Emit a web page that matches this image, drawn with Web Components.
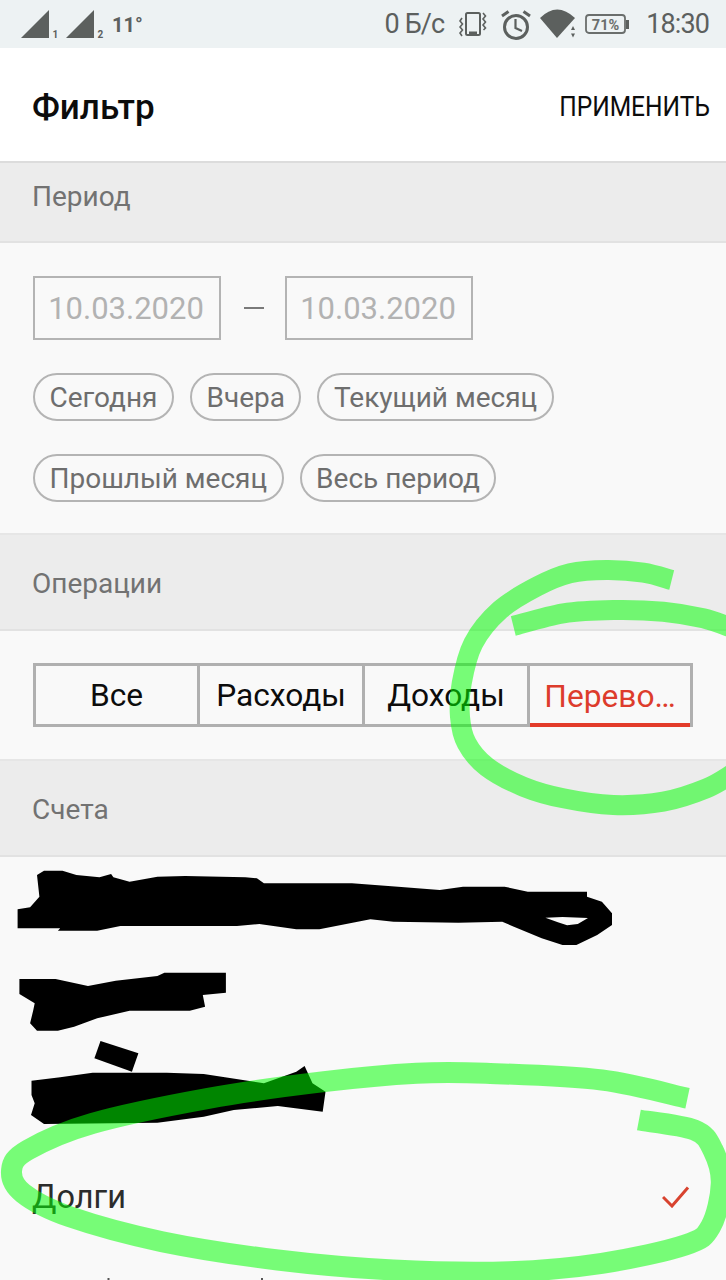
<!DOCTYPE html>
<html lang="ru"><head><meta charset="utf-8"><title>Фильтр</title>
<style>
html,body{margin:0;padding:0;background:#f9f9f9;}
body{width:726px;height:1280px;overflow:hidden;font-family:Roboto,"Noto Sans",sans-serif;}
</style></head><body>
<filter-screen>
  <status-bar></status-bar>
  <app-header title="Фильтр" action="ПРИМЕНИТЬ"></app-header>
  <filter-section heading="Период" head="80" offset="-6">
    <period-picker></period-picker>
  </filter-section>
  <filter-section heading="Операции" head="96" offset="1">
    <segment-tabs></segment-tabs>
  </filter-section>
  <filter-section heading="Счета" head="96" offset="1">
    <account-list></account-list>
  </filter-section>
  <scribble-layer></scribble-layer>
</filter-screen>
<script>
const def=(name,html,init)=>customElements.define(name,class extends HTMLElement{
  constructor(){super();this.attachShadow({mode:'open'});}
  connectedCallback(){this.shadowRoot.innerHTML=typeof html==='function'?html(this):html;if(init)init(this);}
});
def('filter-screen',`<style>:host{display:flex;flex-direction:column;position:relative;width:726px;height:1280px;overflow:hidden;background:#f9f9f9}</style><slot></slot>`);
def('status-bar',`<style>
:host{display:flex;align-items:center;height:48px;background:#edf2f3;color:#5c605e;font-family:Roboto,sans-serif;flex:none;padding:0 17px 0 21px;box-sizing:border-box}
svg{display:block;flex:none}
.n{font-size:27px;line-height:48px;letter-spacing:-.9px}
.t{font-size:20px;font-weight:700;position:relative;top:1px;left:-1px}
.sp{flex:1}
</style>
<svg width="36" height="48" viewBox="0 0 36 48"><path d="M0 38 28 10V38Z" fill="#5c605e"/><text x="31.500" y="37.500" font-size="10" font-weight="700" font-family="Roboto" fill="#5c605e">1</text></svg>
<svg width="47" height="48" viewBox="0 0 47 48" style="margin-left:9px"><path d="M0 38 28 10V38Z" fill="#5c605e"/><text x="31.500" y="37.500" font-size="10" font-weight="700" font-family="Roboto" fill="#5c605e">2</text></svg>
<span class="t">11°</span>
<span class="sp"></span>
<span class="n">0 Б/с</span>
<svg width="28" height="48" viewBox="0 0 28 48" style="margin-left:15px"><rect x="7" y="13" width="14" height="22" rx="1.500" fill="none" stroke="#5c605e" stroke-width="2"/><rect x="10" y="31.500" width="8" height="3" fill="#5c605e"/><path d="M3 18 1 21 3.500 24 1 27 3.500 30 1 33 3 36M24 13 26.500 16 24 19 26.500 22 24 25 26.500 28 24.500 30" fill="none" stroke="#5c605e" stroke-width="1.600"/></svg>
<svg width="34" height="48" viewBox="0 0 34 48" style="margin-left:12px"><circle cx="17" cy="27" r="11.500" fill="none" stroke="#5c605e" stroke-width="3"/><path d="M16.500 19V28L23 31" fill="none" stroke="#5c605e" stroke-width="2.200"/><path d="M3 16 9.500 11.500M31 16 24.500 11.500" stroke="#5c605e" stroke-width="3"/></svg>
<svg width="40" height="48" viewBox="0 0 40 48" style="margin-left:6px"><path d="M1 18Q18 1 36 18L18 38Z" fill="#5c605e"/><path d="M34 26 36 30H32ZM34 37.500 36 33.500H32Z" fill="#5c605e"/></svg>
<svg width="44" height="48" viewBox="0 0 44 48" style="margin-left:6px"><rect x="1" y="15" width="39" height="18" rx="3" fill="none" stroke="#6a6e6c" stroke-width="1.800"/><rect x="41" y="20" width="3" height="9" fill="#5c605e"/><text x="20.500" y="29.500" text-anchor="middle" font-size="14.500" font-weight="700" font-family="Roboto" fill="#6a6e6c">71%</text></svg>
<span class="n" style="margin-left:17px">18:30</span>`);
def('app-header',h=>`<style>
:host{display:flex;align-items:center;justify-content:space-between;flex:none;box-sizing:border-box;height:115px;padding:0 16px 0 32px;background:#fff;border-bottom:2px solid #dcdcdc;font-family:Roboto,sans-serif;color:#0c0c0c}
h1{margin:0;font-size:35px;font-weight:500;position:relative;top:3px}
button{all:unset;font-size:28px;position:relative;top:2px;transform:scaleX(.877);transform-origin:right center;white-space:nowrap}
</style><h1>${h.getAttribute('title')}</h1><button>${h.getAttribute('action')}</button>`);
def('filter-section',h=>`<style>
:host{display:block;flex:none;font-family:Roboto,sans-serif}
header{box-sizing:border-box;height:${h.getAttribute('head')}px;display:flex;align-items:center;padding:0 32px;background:#ececec;color:#727272;font-size:28px;border-bottom:2px solid #e2e2e2}
header span{position:relative;top:${h.getAttribute('offset')}px}
</style><header><span>${h.getAttribute('heading')}</span></header><slot></slot>`);
def('period-picker',`<style>
:host{display:block;box-sizing:border-box;height:292px;padding:33px 33px 0;background:#f9f9f9;border-bottom:2px solid #e6e6e6;font-family:Roboto,sans-serif}
.dates{display:flex;align-items:center}
.d{box-sizing:border-box;width:188px;height:64px;padding-right:2px;border:2px solid #b4b4b4;display:flex;align-items:center;justify-content:center;font-size:31px;color:#b2b2b2}
.dash{width:20px;height:2.500px;background:#7a7a7a;margin:0 21px 0 23px}
.chips{display:flex;flex-wrap:wrap;gap:33px 16px;margin-top:33px}
</style><div class="dates"><div class="d">10.03.2020</div><div class="dash"></div><div class="d">10.03.2020</div></div>
<div class="chips"><period-chip>Сегодня</period-chip><period-chip>Вчера</period-chip><period-chip>Текущий месяц</period-chip><period-chip>Прошлый месяц</period-chip><period-chip>Весь период</period-chip></div>`);
def('period-chip',`<style>:host{display:inline-flex;align-items:center;box-sizing:border-box;height:48px;padding:0 14.500px;border:2px solid #b4b4b4;border-radius:24px;font-size:28px;color:#6e6e6e;white-space:nowrap}</style><slot></slot>`);
def('segment-tabs',`<style>
:host{display:block;box-sizing:border-box;height:130px;padding:32px 33px 0;background:#f9f9f9;border-bottom:2px solid #e6e6e6;font-family:Roboto,sans-serif}
.w{display:grid;grid-template-columns:164px 165px 165px 160px;width:660px;height:64px;box-sizing:border-box;border:solid #b0b0b0;border-width:3px}
.c{display:flex;align-items:center;justify-content:center;padding-top:1px;font-size:31.700px;color:#0c0c0c;border-right:3px solid #b0b0b0;box-sizing:border-box}
.c:last-child{border-right:0;color:#dd3c2c;border-bottom:4.500px solid #e33b2a;padding-top:3px;margin-bottom:-3px}
</style><div class="w"><div class="c">Все</div><div class="c">Расходы</div><div class="c">Доходы</div><div class="c">Перево…</div></div>`);
def('account-list',`<style>
:host{display:block;background:#f9f9f9;font-family:Roboto,sans-serif}
.r{box-sizing:border-box;height:97px;padding:0 36px 0 32px;display:flex;align-items:center;justify-content:space-between;font-size:32.500px;color:#2c2c2c}
svg{display:block}
</style><div class="r"></div><div class="r"></div><div class="r"></div>
<div class="r"><span>Долги</span><svg width="28" height="22" viewBox="0 0 28 22"><path d="M1 11 10 20 26 1.500" fill="none" stroke="#d8432f" stroke-width="3"/></svg></div>
<div class="r"></div>`);
/* Smooth curve through points given in zoom-crop coordinates */
const smooth=(pts)=>{let d=`M${pts[0][0].toFixed(1)} ${pts[0][1].toFixed(1)}`;
  for(let i=0;i<pts.length-1;i++){const a=pts[i-1]||pts[i],b=pts[i],c=pts[i+1],e=pts[i+2]||c;
    d+=`C${(b[0]+(c[0]-a[0])/6).toFixed(1)} ${(b[1]+(c[1]-a[1])/6).toFixed(1)} ${(c[0]-(e[0]-b[0])/6).toFixed(1)} ${(c[1]-(e[1]-b[1])/6).toFixed(1)} ${c[0].toFixed(1)} ${c[1].toFixed(1)}`;}
  return d;};
const A=p=>p.map(([x,y])=>[x/2.16,y/3+850]);
const B=p=>p.map(([x,y])=>[x/3+430,y/3+550]);
const poly=p=>'M'+A(p).map(q=>q[0].toFixed(1)+' '+q[1].toFixed(1)).join('L')+'Z';
const black=[
 poly([[80,75],[95,62],[135,62],[165,75],[215,82],[240,72],[245,82],[280,95],[340,80],[400,78],[530,82],[555,85],[570,100],[690,100],[760,100],[860,110],[950,120],[1000,110],[1090,110],[1140,125],[1268,125],[1268,140],[1300,155],[1322,190],[1322,225],[1290,255],[1245,285],[1215,285],[1170,265],[1110,230],[1085,215],[990,218],[850,215],[800,208],[690,238],[640,238],[560,222],[512,228],[260,228],[210,242],[125,242],[130,235],[38,235],[38,178],[65,172],[85,140]])+poly([[1178,203],[1205,217],[1225,226],[1248,222],[1270,204],[1215,201]]),
 poly([[42,387],[120,387],[190,408],[250,392],[340,378],[355,368],[488,368],[488,428],[438,435],[443,470],[410,482],[280,482],[210,505],[160,530],[125,542],[80,542],[65,520],[72,480],[75,460],[42,432]]),
 poly([[217,573],[299,610],[285,665],[204,625]]),
 poly([[68,692],[130,682],[200,668],[360,668],[440,672],[570,700],[640,665],[658,648],[675,700],[703,725],[697,785],[600,768],[505,780],[440,800],[340,818],[95,822],[67,795],[75,760],[68,735]])
];
const strokes=[
 [smooth(B([[725,90],[640,68],[530,60],[420,70],[320,110],[210,180],[130,280],[95,400],[90,500],[110,580],[170,650],[280,710],[400,745],[550,765],[700,755],[830,715],[910,670]])),20],
 [smooth(B([[250,228],[400,190],[550,180],[700,185],[820,205],[910,235]])),20],
 [smooth(A([[1485,745],[1300,690],[1050,670],[900,670],[700,695],[450,745],[200,820],[60,900],[25,960],[50,1030],[150,1100],[350,1175],[600,1230],[850,1260],[1100,1265],[1300,1240],[1480,1185],[1535,1130],[1558,1000],[1540,900],[1500,840],[1380,810]])),21]
];
def('scribble-layer',`<style>:host{position:absolute;inset:0;pointer-events:none}svg{display:block}</style>
<svg width="726" height="1280" viewBox="0 0 726 1280">
${black.map(d=>`<path d="${d}" fill="#000" fill-rule="evenodd"/>`).join('')}
${strokes.map(([d,w])=>`<path d="${d}" fill="none" stroke="#0f0" stroke-opacity=".52" stroke-width="${w}"/>`).join('')}
<path d="M107.500 1278h2v2h-2zM261 1278h2v2h-2z" fill="#555"/>
</svg>`);
</script></body></html>
